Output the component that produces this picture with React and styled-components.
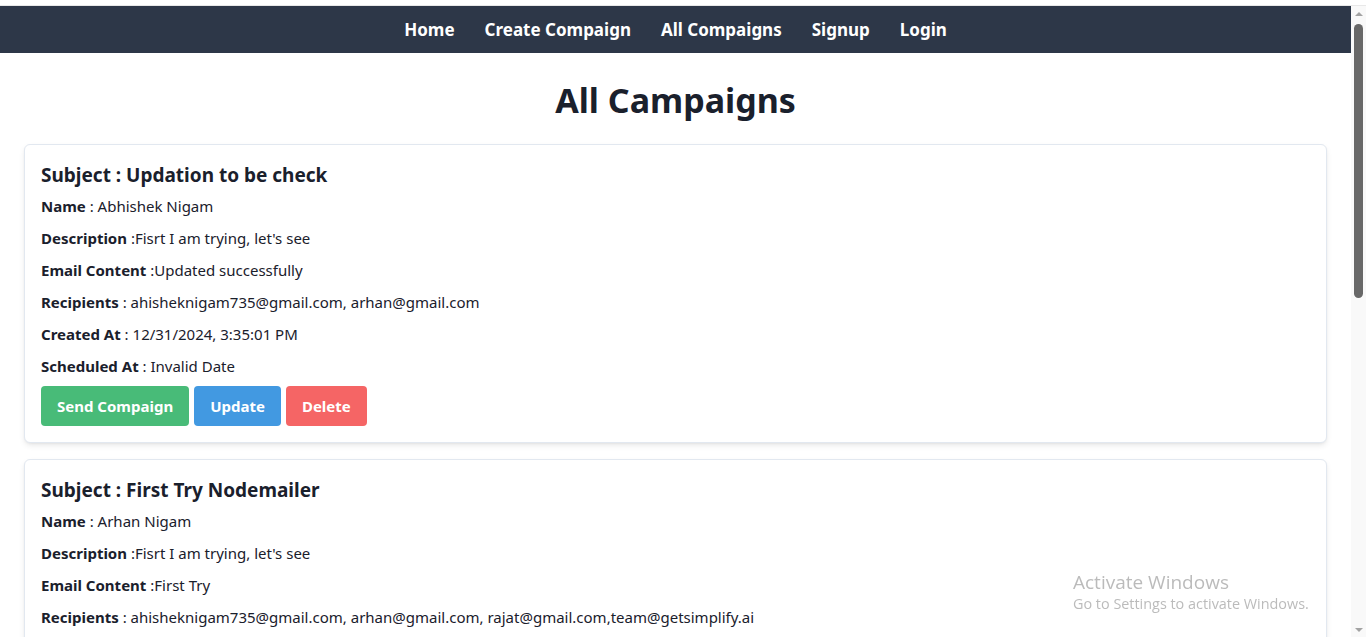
import React from 'react';
import styled, { createGlobalStyle } from 'styled-components';

const GlobalStyle = createGlobalStyle`
  html, body {
    margin: 0;
    padding: 0;
    background: #ffffff;
    overflow: hidden;
  }
  body {
    font-family: 'Noto Sans', 'Open Sans', sans-serif;
    color: #1a202c;
  }
  * { box-sizing: border-box; }
`;

/* ---------- Window shell: content + scrollbar ---------- */
const Shell = styled.div`
  margin-top: 5px;
  border-top: 1px solid #e8e8e8;
  height: calc(100vh - 6px);
  display: flex;
`;

const Viewport = styled.div`
  flex: 1;
  min-width: 0;
  overflow: hidden;
`;

const ScrollTrack = styled.div`
  width: 15px;
  flex-shrink: 0;
  background: #f9f9f9;
  display: flex;
  flex-direction: column;
  align-items: center;
`;

const Arrow = styled.div`
  width: 15px;
  height: 15px;
  display: flex;
  align-items: center;
  justify-content: center;

  &::after {
    content: '';
    border-left: 4px solid transparent;
    border-right: 4px solid transparent;
    ${(p) =>
      p.$down ? 'border-top: 4px solid #a3a3a3;' : 'border-bottom: 4px solid #a3a3a3;'}
  }
`;

const Thumb = styled.div`
  width: 9px;
  height: 274px;
  margin-top: 3px;
  border-radius: 5px;
  background: #686868;
`;

const TrackFill = styled.div`
  flex: 1;
`;

/* ---------- Navbar ---------- */
const NavBar = styled.nav`
  background-color: #2d3748;
  height: 47px;
  display: flex;
  align-items: center;
  justify-content: center;
  gap: 30px;
`;

const NavLink = styled.a`
  color: #ffffff;
  font-weight: 700;
  font-size: 17px;
  text-decoration: none;
  margin-top: -1px;
`;

/* ---------- Page ---------- */
const Page = styled.main`
  padding: 24px;
`;

const Title = styled.h1`
  text-align: center;
  font-size: 34px;
  line-height: 40px;
  font-weight: 700;
  margin: 3px 0 24px;
  color: #1a202c;
`;

/* ---------- Card ---------- */
const Card = styled.div`
  border: 1px solid #e2e8f0;
  border-radius: 6px;
  padding: 16px;
  margin-bottom: 16px;
  background: #fff;
  box-shadow: 0 3px 6px -1px rgba(0, 0, 0, 0.1), 0 1px 3px -1px rgba(0, 0, 0, 0.08);
`;

const Subject = styled.h2`
  font-size: 19px;
  line-height: 28px;
  font-weight: 700;
  margin: 0 0 5px;
`;

const Field = styled.p`
  font-size: 15px;
  line-height: 24px;
  margin: 0 0 8px;

  b {
    font-weight: 700;
  }
`;

const Actions = styled.div`
  display: flex;
  gap: 5px;
  margin-top: 4px;
`;

const Button = styled.button`
  border: none;
  border-radius: 4px;
  padding: 8px 16px;
  font-family: inherit;
  font-size: 15px;
  line-height: 24px;
  font-weight: 700;
  color: #ffffff;
  cursor: pointer;
  background-color: ${(p) =>
    p.$kind === 'send' ? '#48bb78' : p.$kind === 'update' ? '#4299e1' : '#f56565'};
`;

/* ---------- Windows watermark ---------- */
const Watermark = styled.div`
  position: fixed;
  left: 1073px;
  bottom: 24px;
  color: rgba(120, 120, 120, 0.5);
  font-family: 'Open Sans', sans-serif;
  pointer-events: none;

  div:first-child {
    font-size: 19px;
    line-height: 24px;
  }
  div:last-child {
    font-size: 14.4px;
    line-height: 20px;
  }
`;

const campaigns = [
  {
    subject: 'Updation to be check',
    name: 'Abhishek Nigam',
    description: "Fisrt I am trying, let's see",
    content: 'Updated successfully',
    recipients: 'ahisheknigam735@gmail.com, arhan@gmail.com',
    created: '12/31/2024, 3:35:01 PM',
    scheduled: 'Invalid Date',
  },
  {
    subject: 'First Try Nodemailer',
    name: 'Arhan Nigam',
    description: "Fisrt I am trying, let's see",
    content: 'First Try',
    recipients: 'ahisheknigam735@gmail.com, arhan@gmail.com, rajat@gmail.com,team@getsimplify.ai',
    created: '12/30/2024, 11:12:45 AM',
    scheduled: 'Invalid Date',
  },
];

export default function App() {
  return (
    <>
      <GlobalStyle />
      <Shell>
        <Viewport>
          <NavBar>
            <NavLink href="#">Home</NavLink>
            <NavLink href="#">Create Compaign</NavLink>
            <NavLink href="#">All Compaigns</NavLink>
            <NavLink href="#">Signup</NavLink>
            <NavLink href="#">Login</NavLink>
          </NavBar>
          <Page>
            <Title>All Campaigns</Title>
            {campaigns.map((c) => (
              <Card key={c.subject}>
                <Subject>Subject : {c.subject}</Subject>
                <Field><b>Name</b> : {c.name}</Field>
                <Field><b>Description</b> :{c.description}</Field>
                <Field><b>Email Content</b> :{c.content}</Field>
                <Field><b>Recipients</b> : {c.recipients}</Field>
                <Field><b>Created At</b> : {c.created}</Field>
                <Field><b>Scheduled At</b> : {c.scheduled}</Field>
                <Actions>
                  <Button $kind="send">Send Compaign</Button>
                  <Button $kind="update">Update</Button>
                  <Button $kind="delete">Delete</Button>
                </Actions>
              </Card>
            ))}
          </Page>
        </Viewport>
        <ScrollTrack>
          <Arrow />
          <Thumb />
          <TrackFill />
          <Arrow $down />
        </ScrollTrack>
      </Shell>
      <Watermark>
        <div>Activate Windows</div>
        <div>Go to Settings to activate Windows.</div>
      </Watermark>
    </>
  );
}
